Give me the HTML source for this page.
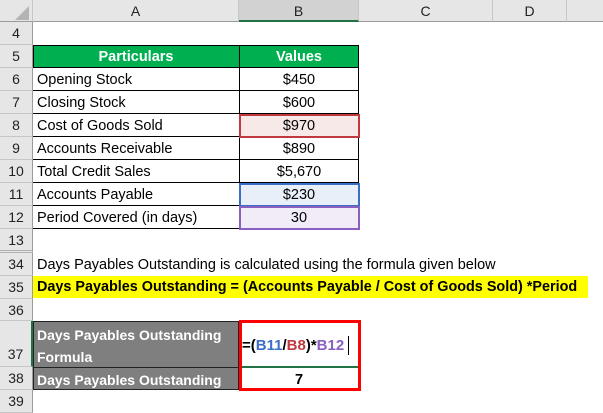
<!DOCTYPE html>
<html><head><style>
body{margin:0;width:603px;height:411px;overflow:hidden;background:#fff;font-family:"Liberation Sans",sans-serif;position:relative}
div{position:absolute;box-sizing:border-box}
.ch{top:0;height:22px;background:#e6e6e6;border-right:1px solid #c6c6c6;border-bottom:1px solid #9b9b9b;text-align:center;font-size:14px;line-height:22px;color:#222}
.rh{left:0;width:33px;background:#e6e6e6;border-right:1px solid #9b9b9b;border-bottom:1px solid #c6c6c6;text-align:center;font-size:14px;color:#222;padding-top:3px}
.t{font-size:14.5px;white-space:nowrap;color:#000}
</style></head><body>
<div class="ch" style="left:0;width:33px"></div>
<svg style="position:absolute;left:15px;top:6px" width="14" height="14"><polygon points="14,0 14,14 0,14" fill="#b4b4b4"/></svg>
<div class="ch" style="left:33px;width:206px">A</div>
<div class="ch" style="left:239px;width:120px;background:#d2d2d2;border-bottom:2px solid #217346">B</div>
<div class="ch" style="left:359px;width:134px">C</div>
<div class="ch" style="left:493px;width:74px">D</div>
<div class="ch" style="left:567px;width:40px"></div>

<div class="rh" style="top:22px;height:23px">4</div>
<div class="rh" style="top:45px;height:23px">5</div>
<div class="rh" style="top:68px;height:23px">6</div>
<div class="rh" style="top:91px;height:23px">7</div>
<div class="rh" style="top:114px;height:23px">8</div>
<div class="rh" style="top:137px;height:23px">9</div>
<div class="rh" style="top:160px;height:23px">10</div>
<div class="rh" style="top:183px;height:23px">11</div>
<div class="rh" style="top:206px;height:23px">12</div>
<div class="rh" style="top:229px;height:24px;border-bottom:3px double #b0b0b0">13</div>
<div class="rh" style="top:253px;height:23px">34</div>
<div class="rh" style="top:276px;height:23px">35</div>
<div class="rh" style="top:299px;height:22px">36</div>
<div class="rh" style="top:321px;height:46px;padding-top:25px;border-right:2px solid #217346">37</div>
<div class="rh" style="top:367px;height:23px">38</div>
<div class="rh" style="top:390px;height:23px">39</div>

<div style="left:33px;top:45px;width:326px;height:23px;background:#00b050;border:1px solid #000"></div>
<div style="left:239px;top:45px;width:1px;height:184px;background:#000"></div>
<div style="left:358px;top:45px;width:1px;height:184px;background:#000"></div>
<div class="t" style="left:33px;top:49px;width:206px;text-align:center;color:#fff;font-weight:bold">Particulars</div>
<div class="t" style="left:239px;top:49px;width:120px;text-align:center;color:#fff;font-weight:bold">Values</div>

<div style="left:240px;top:115px;width:118px;height:22px;background:#f8e9e9"></div>
<div style="left:240px;top:184px;width:118px;height:22px;background:#e8eff9"></div>
<div style="left:240px;top:207px;width:118px;height:22px;background:#f1ecf8"></div>

<div style="left:33px;top:90px;width:326px;height:1px;background:#000"></div>
<div style="left:33px;top:113px;width:326px;height:1px;background:#000"></div>
<div style="left:33px;top:136px;width:326px;height:1px;background:#000"></div>
<div style="left:33px;top:159px;width:326px;height:1px;background:#000"></div>
<div style="left:33px;top:182px;width:326px;height:1px;background:#000"></div>
<div style="left:33px;top:205px;width:326px;height:1px;background:#000"></div>
<div style="left:33px;top:228px;width:326px;height:1px;background:#000"></div>

<div style="left:239px;top:114px;width:121px;height:24px;border:2px solid #c0393e"></div>
<div style="left:239px;top:183px;width:121px;height:24px;border:2px solid #3b6fc6"></div>
<div style="left:239px;top:206px;width:121px;height:24px;border:2px solid #8a5fc1"></div>

<div class="t" style="left:37px;top:72px">Opening Stock</div>
<div class="t" style="left:37px;top:95px">Closing Stock</div>
<div class="t" style="left:37px;top:118px">Cost of Goods Sold</div>
<div class="t" style="left:37px;top:141px">Accounts Receivable</div>
<div class="t" style="left:37px;top:164px">Total Credit Sales</div>
<div class="t" style="left:37px;top:187px">Accounts Payable</div>
<div class="t" style="left:37px;top:210px">Period Covered (in days)</div>
<div class="t" style="left:239px;width:120px;text-align:center;top:72px">$450</div>
<div class="t" style="left:239px;width:120px;text-align:center;top:95px">$600</div>
<div class="t" style="left:239px;width:120px;text-align:center;top:118px">$970</div>
<div class="t" style="left:239px;width:120px;text-align:center;top:141px">$890</div>
<div class="t" style="left:239px;width:120px;text-align:center;top:164px">$5,670</div>
<div class="t" style="left:239px;width:120px;text-align:center;top:187px">$230</div>
<div class="t" style="left:239px;width:120px;text-align:center;top:210px">30</div>

<div class="t" style="left:37px;top:257px">Days Payables Outstanding is calculated using the formula given below</div>
<div style="left:33px;top:276px;width:555px;height:22px;background:#ffff00"></div>
<div class="t" style="left:37px;top:279px;font-weight:bold;font-size:14.4px">Days Payables Outstanding = (Accounts Payable / Cost of Goods Sold) *Period</div>

<div style="left:33px;top:321px;width:206px;height:69px;background:#7f7f7f;border:1px solid #222"></div>
<div style="left:33px;top:367px;width:206px;height:1px;background:#222"></div>
<div class="t" style="left:37px;top:327px;color:#fff;font-weight:bold;font-size:14px">Days Payables Outstanding</div>
<div class="t" style="left:37px;top:349px;color:#fff;font-weight:bold;font-size:14px">Formula</div>
<div class="t" style="left:37px;top:372px;color:#fff;font-weight:bold;font-size:14px">Days Payables Outstanding</div>
<div style="left:242px;top:366px;width:117px;height:2px;background:#217346"></div>
<div class="t" style="left:242px;top:337px;font-weight:bold;font-size:15px">=(<span style="color:#3b6fc6">B11</span>/<span style="color:#c0393e">B8</span>)*<span style="color:#8a5fc1">B12</span></div>
<div style="left:348px;top:336px;width:1px;height:19px;background:#000"></div>
<div class="t" style="left:239px;width:120px;text-align:center;top:372px;font-weight:bold">7</div>
<div style="left:239px;top:320px;width:122px;height:71px;border:3px solid #ff0000"></div>
</body></html>
